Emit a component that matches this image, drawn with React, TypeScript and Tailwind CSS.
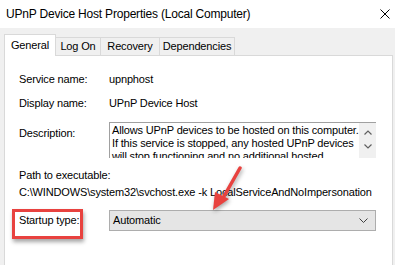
import React from "react";

export default function App() {
  const font = { fontFamily: '"Liberation Sans", Arial, sans-serif' };
  return (
    <div
      className="w-[395px] h-[265px] bg-[#f0f0f0] overflow-hidden flex flex-col text-black"
      style={font}
    >
      {/* Title bar */}
      <div className="h-[28px] bg-white flex items-center justify-between pl-[6px] pr-[4px] shrink-0">
        <span className="text-[12px] tracking-[-0.2px] leading-none">UPnP Device Host Properties (Local Computer)</span>
        <svg width="10" height="10" viewBox="0 0 10 10" className="mr-[1px]">
          <path d="M0.5 0.5 L9.5 9.5 M9.5 0.5 L0.5 9.5" stroke="#000" strokeWidth="1" />
        </svg>
      </div>

      {/* Tabs */}
      <div className="mt-[6px] h-[21px] flex items-end pl-[4px] shrink-0 text-[11px] tracking-[-0.15px] relative z-10">
        <div className="h-[22px] w-[52px] bg-white border border-[#d9d9d9] border-b-0 flex items-center justify-center -mb-[1px] pb-[1px]">
          General
        </div>
        <div className="h-[18px] w-[45px] border border-[#d9d9d9] border-l-0 border-b-0 flex items-center justify-center">
          Log On
        </div>
        <div className="h-[18px] w-[59px] border border-[#d9d9d9] border-l-0 border-b-0 flex items-center justify-center">
          Recovery
        </div>
        <div className="h-[18px] w-[75px] border border-[#d9d9d9] border-l-0 border-b-0 flex items-center justify-center">
          Dependencies
        </div>
      </div>

      {/* Panel */}
      <div className="flex-1 ml-[4px] mr-[2px] bg-white border border-[#d9d9d9] border-b-0 relative text-[11px] tracking-[-0.15px]">
        <div className="flex flex-col pt-[15px] pl-[14px]">
          <div className="flex h-[16px] items-center">
            <div className="w-[90px]">Service name:</div>
            <div>upnphost</div>
          </div>
          <div className="flex h-[16px] items-center mt-[8px]">
            <div className="w-[90px]">Display name:</div>
            <div>UPnP Device Host</div>
          </div>
          <div className="flex mt-[11px]">
            <div className="w-[90px] mt-[3px] h-[16px] flex items-center">Description:</div>
            <div className="w-[267px] h-[36px] border-t border-l border-[#a0a0a0] flex overflow-hidden">
              <div className="flex-1 pl-[2px] pt-[1px] leading-[13px] overflow-hidden whitespace-nowrap">
                Allows UPnP devices to be hosted on this computer.
                <br />
                If this service is stopped, any hosted UPnP devices
                <br />
                will stop functioning and no additional hosted
              </div>
              <div className="w-[17px] bg-[#f0f0f0] flex flex-col items-center justify-start pt-[7px] gap-[9px]">
                <svg width="8" height="5" viewBox="0 0 8 5">
                  <path d="M0.5 4.5 L4 1 L7.5 4.5" stroke="#606060" strokeWidth="1.2" fill="none" />
                </svg>
                <svg width="8" height="5" viewBox="0 0 8 5">
                  <path d="M0.5 0.5 L4 4 L7.5 0.5" stroke="#606060" strokeWidth="1.2" fill="none" />
                </svg>
              </div>
            </div>
          </div>
          <div className="h-[16px] flex items-center mt-[9px]">Path to executable:</div>
          <div className="h-[16px] flex items-center mt-[1px] whitespace-nowrap">
            C:\WINDOWS\system32\svchost.exe -k LocalServiceAndNoImpersonation
          </div>
          <div className="flex mt-[10px] items-center">
            <div className="w-[90px] relative h-[16px] flex items-center">
              Startup type:
              <div className="absolute left-[-7px] top-[-4px] w-[71px] h-[30px] border-[3px] border-[#e8423f] shadow-[1px_3px_4px_rgba(0,0,0,0.35)]" />
            </div>
            <div className="w-[267px] h-[21px] bg-[#e5e5e5] border border-[#adadad] flex items-center justify-between pl-[3px] pr-[7px]">
              <span>Automatic</span>
              <svg width="9" height="5" viewBox="0 0 9 5">
                <path d="M0.5 0.5 L4.5 4.5 L8.5 0.5" stroke="#404040" strokeWidth="1" fill="none" />
              </svg>
            </div>
          </div>
        </div>

        {/* Red arrow */}
        <svg
          className="absolute left-[198px] top-[108px]"
          width="45"
          height="50"
          viewBox="0 0 45 50"
          style={{ filter: "drop-shadow(1px 2px 2px rgba(0,0,0,0.35))" }}
        >
          <path d="M37 4 L20 34" stroke="#e8423f" strokeWidth="3.5" strokeLinecap="round" />
          <path d="M10 46 L12 28 L26 35 Z" fill="#e8423f" />
        </svg>
      </div>
    </div>
  );
}
